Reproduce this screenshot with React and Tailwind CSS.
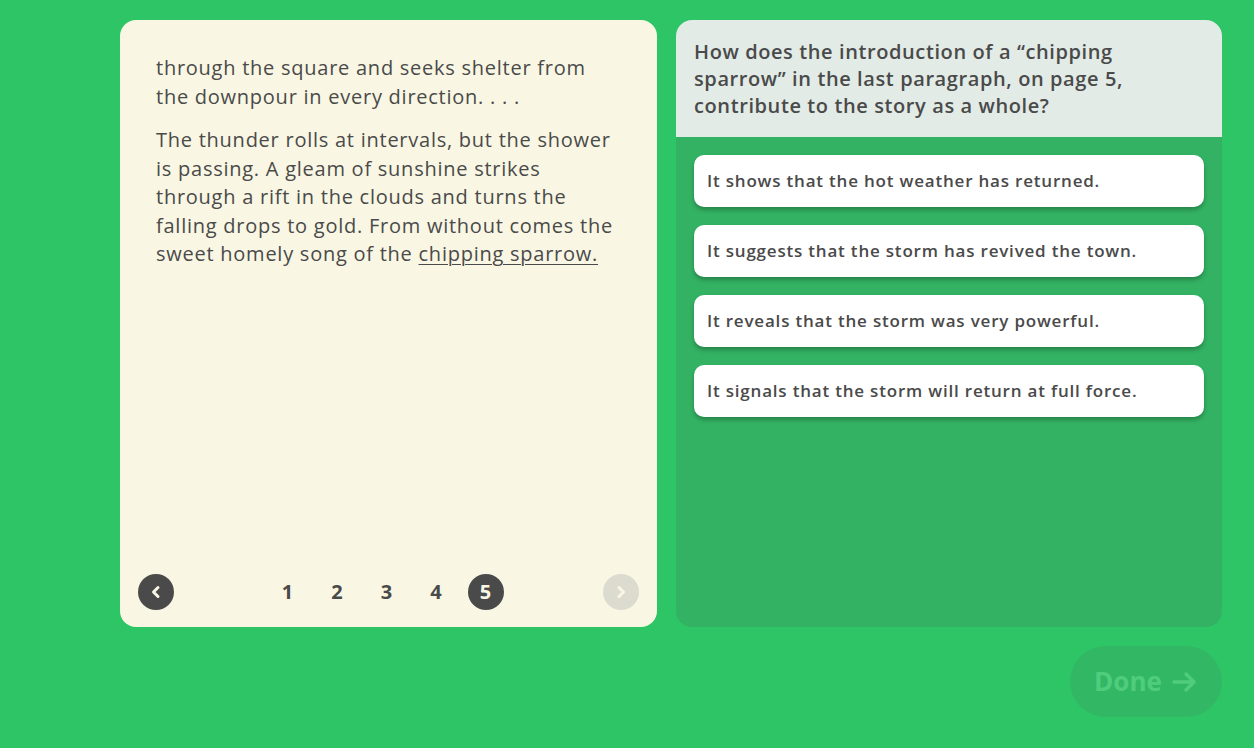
import React from 'react';

const options = [
    'It shows that the hot weather has returned.',
    'It suggests that the storm has revived the town.',
    'It reveals that the storm was very powerful.',
    'It signals that the storm will return at full force.',
];

const pages = [1, 2, 3, 4, 5];

export default function App() {
    const current = 5;
    return (
        <div className="w-[1254px] h-[748px] bg-[#2dc566] text-[#4a4a4a] overflow-hidden" style={{ fontFamily: '"Open Sans", sans-serif' }}>
            <div className="flex gap-[19px] pl-[120px] pt-[20px]">
                {/* Passage */}
                <div className="w-[537px] h-[607px] bg-[#f9f7e3] rounded-[16px] flex flex-col">
                    <div className="flex-1 pl-[36px] pr-[36px] pt-[34px] text-[20px] leading-[28.5px] tracking-[0.75px]">
                        <p>through the square and seeks shelter from the downpour in every direction. . . .</p>
                        <p className="mt-[15px]">
                            The thunder rolls at intervals, but the shower is passing. A gleam of sunshine strikes through a rift in the clouds and turns the falling drops to gold. From without comes the sweet homely song of the <span className="underline underline-offset-[3px] decoration-1">chipping sparrow.</span>
                        </p>
                    </div>
                    <div className="h-[36px] mb-[17px] px-[18px] flex items-center justify-between">
                        <button className="w-[36px] h-[36px] rounded-full bg-[#4a4a4a] flex items-center justify-center">
                            <svg width="14" height="14" viewBox="0 0 14 14"><path d="M9 2.5 L4.5 7 L9 11.5" fill="none" stroke="#f9f7e3" strokeWidth="3" strokeLinecap="round" strokeLinejoin="round" /></svg>
                        </button>
                        <div className="flex items-center gap-[13.5px] ml-[-4px]">
                            {pages.map((p) => (
                                <div
                                    key={p}
                                    className={
                                        p === current
                                            ? 'w-[36px] h-[36px] rounded-full bg-[#4a4a4a] text-[#f9f7e3] flex items-center justify-center text-[20px] font-bold'
                                            : 'w-[36px] h-[36px] flex items-center justify-center text-[20px] font-bold text-[#4a4a4a]'
                                    }
                                >
                                    {p}
                                </div>
                            ))}
                        </div>
                        <button className="w-[36px] h-[36px] rounded-full bg-[#dcdbd0] flex items-center justify-center">
                            <svg width="14" height="14" viewBox="0 0 14 14"><path d="M5 2.5 L9.5 7 L5 11.5" fill="none" stroke="#f9f7e3" strokeWidth="3" strokeLinecap="round" strokeLinejoin="round" /></svg>
                        </button>
                    </div>
                </div>

                {/* Question */}
                <div className="w-[546px] h-[607px] bg-[#33b263] rounded-[16px] overflow-hidden flex flex-col">
                    <div className="bg-[#e2ebe6] h-[117px] pl-[18px] pr-[90px] pt-[18px] text-[20px] leading-[27px] font-semibold tracking-[0.6px]">
                        How does the introduction of a “chipping sparrow” in the last paragraph, on page 5, contribute to the story as a whole?
                    </div>
                    <div className="flex flex-col gap-[18px] px-[18px] pt-[18px]">
                        {options.map((o) => (
                            <button
                                key={o}
                                className="h-[52px] bg-white rounded-[10px] text-left px-[13px] text-[17px] font-semibold tracking-[0.8px] shadow-[0_3px_4px_rgba(0,0,0,0.25)]"
                            >
                                {o}
                            </button>
                        ))}
                    </div>
                </div>
            </div>

            <div className="flex justify-end pr-[32px] pt-[19px]">
                <button className="w-[152px] h-[71px] rounded-full bg-[#32b864] flex items-center justify-center gap-[10px] text-[#4fcc7c] text-[26px] font-bold">
                    Done
                    <svg width="26" height="22" viewBox="0 0 26 22"><path d="M2 11 H22 M14 3 L22 11 L14 19" fill="none" stroke="#4fcc7c" strokeWidth="3.5" strokeLinecap="round" strokeLinejoin="round" /></svg>
                </button>
            </div>
        </div>
    );
}
